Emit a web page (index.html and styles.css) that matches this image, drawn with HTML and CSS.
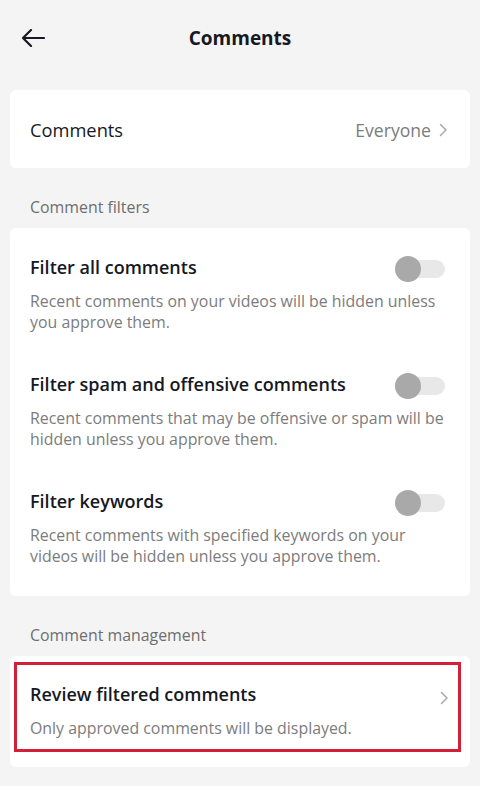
FILE: index.html
```html
<!DOCTYPE html>
<html lang="en">
<head>
<meta charset="utf-8">
<title>Comments</title>
<link rel="stylesheet" href="styles.css">
</head>
<body>
<div class="page">
  <header class="topbar">
    <span class="back" aria-label="Back">
      <svg width="24" height="18" viewBox="0 0 24 18"><path d="M23 9H2M10 1L2 9l8 8" fill="none" stroke="#161823" stroke-width="2.2" stroke-linecap="round" stroke-linejoin="round"/></svg>
    </span>
    <h1 class="title">Comments</h1>
  </header>

  <section class="card card-single">
    <div class="single-row">
      <span class="row-title-regular">Comments</span>
      <span class="value">Everyone
        <svg class="chev" width="9" height="14" viewBox="0 0 9 14"><path d="M1.5 1.5L7 7l-5.5 5.5" fill="none" stroke="#a9a9a9" stroke-width="1.5" stroke-linecap="round" stroke-linejoin="round"/></svg>
      </span>
    </div>
  </section>

  <div class="section-label">Comment filters</div>

  <section class="card card-filters">
    <div class="setting">
      <div class="setting-head">
        <span class="row-title">Filter all comments</span>
        <span class="toggle"><span class="knob"></span></span>
      </div>
      <p class="desc">Recent comments on your videos will be hidden unless you approve them.</p>
    </div>
    <div class="setting">
      <div class="setting-head">
        <span class="row-title">Filter spam and offensive comments</span>
        <span class="toggle"><span class="knob"></span></span>
      </div>
      <p class="desc">Recent comments that may be offensive or spam will be hidden unless you approve them.</p>
    </div>
    <div class="setting">
      <div class="setting-head">
        <span class="row-title">Filter keywords</span>
        <span class="toggle"><span class="knob"></span></span>
      </div>
      <p class="desc">Recent comments with specified keywords on your videos will be hidden unless you approve them.</p>
    </div>
  </section>

  <div class="section-label">Comment management</div>

  <section class="card card-manage">
    <div class="highlight">
      <div class="setting-head">
        <span class="row-title">Review filtered comments</span>
        <svg class="chev chev-low" width="9" height="14" viewBox="0 0 9 14"><path d="M1.5 1.5L7 7l-5.5 5.5" fill="none" stroke="#a9a9a9" stroke-width="1.5" stroke-linecap="round" stroke-linejoin="round"/></svg>
      </div>
      <p class="desc">Only approved comments will be displayed.</p>
    </div>
  </section>
</div>
</body>
</html>
```

FILE: styles.css
```css
* { box-sizing: border-box; }
html, body {
  margin: 0;
  padding: 0;
  background: #f4f4f4;
}
body {
  font-family: "Open Sans", "Liberation Sans", Arial, sans-serif;
  color: #161823;
  width: 480px;
  height: 786px;
  overflow: hidden;
}
.page {
  padding: 0 10px;
}
.topbar {
  height: 76px;
  display: flex;
  align-items: center;
  justify-content: center;
  position: relative;
  margin: 0 -10px 14px;
}
.back {
  position: absolute;
  left: 21px;
  top: 29px;
  display: flex;
}
.title {
  margin: 0;
  font-size: 19px;
  font-weight: 700;
  line-height: 24px;
}
.card {
  background: #ffffff;
  border-radius: 6px;
}
.card-single {
  height: 78px;
  display: flex;
  align-items: center;
  padding: 0 22px 0 20px;
}
.single-row {
  flex: 1;
  display: flex;
  align-items: center;
  justify-content: space-between;
  padding-top: 2px;
}
.row-title-regular {
  font-size: 18.3px;
  line-height: 22px;
}
.value {
  display: flex;
  align-items: center;
  gap: 8px;
  font-size: 17.6px;
  color: #7c7c7c;
  line-height: 22px;
}
.chev { display: block; }
.section-label {
  padding: 30px 20px 11px;
  font-size: 15.9px;
  line-height: 19px;
  color: #6e6e6e;
}
.card-filters {
  padding: 28px 25px 29px 20px;
  display: flex;
  flex-direction: column;
  gap: 40px;
}
.setting-head {
  display: flex;
  align-items: center;
  justify-content: space-between;
  height: 22px;
}
.row-title {
  font-size: 18px;
  font-weight: 600;
  line-height: 22px;
}
.desc {
  margin: 13px 0 0;
  font-size: 15.9px;
  line-height: 21px;
  color: #7c7c7c;
}
.toggle {
  position: relative;
  width: 50px;
  height: 18px;
  border-radius: 9px;
  background: #e8e8e8;
  flex: none;
  margin-top: 4px;
}
.knob {
  position: absolute;
  left: 0;
  top: -4px;
  width: 26px;
  height: 26px;
  border-radius: 50%;
  background: #a9a9a9;
}
.card-manage {
  padding: 6px 9px 15px 4px;
}
.highlight {
  border: 3px solid #d31f37;
  padding: 18px 9px 10px 13px;
}
.chev-low {
  margin-top: 7px;
}
```
